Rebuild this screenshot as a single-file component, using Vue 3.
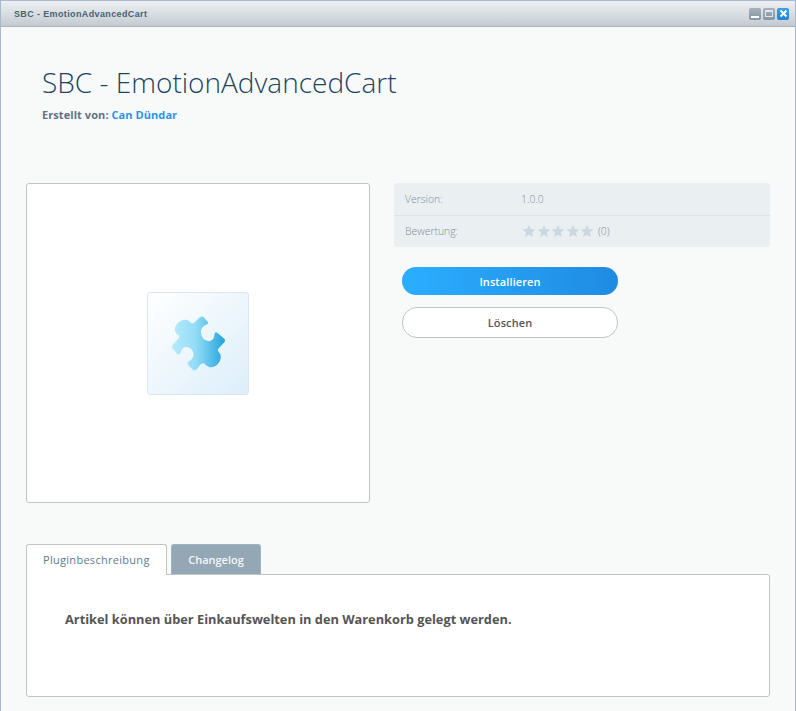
<script setup>
const stars = [1, 2, 3, 4, 5]
</script>

<template>
  <div class="window">
    <div class="titlebar">
      <span class="wintitle">SBC - EmotionAdvancedCart</span>
      <div class="controls">
        <span class="ctl ctl-grey"><i class="min"></i></span>
        <span class="ctl ctl-grey"><i class="max"></i></span>
        <span class="ctl ctl-blue">
          <svg width="9" height="9" viewBox="0 0 9 9"><path d="M1.5 1.5l6 6M7.5 1.5l-6 6" stroke="#fff" stroke-width="2" fill="none" /></svg>
        </span>
      </div>
    </div>
    <div class="content">
      <header class="head">
        <h1>SBC - EmotionAdvancedCart</h1>
        <p class="author">Erstellt von: <a>Can Dündar</a></p>
      </header>
      <section class="main">
        <div class="preview">
          <div class="thumb">
            <svg width="57" height="57" viewBox="120 105 170 170">
              <defs>
                <linearGradient id="pz" x1="0" y1="0" x2="1" y2="0">
                  <stop offset="0" stop-color="#b8eafc" />
                  <stop offset="0.45" stop-color="#93dcf6" />
                  <stop offset="1" stop-color="#22a3dc" />
                </linearGradient>
              </defs>
              <path fill="url(#pz)" d="M209 112 Q215 107 221 112 L233 126 Q236 130 230 133 Q212 140 212 156 Q214 182 236 183 Q252 182 253 160 Q256 154 262 159 L282 176 Q287 181 282 186 L264 206 Q260 212 266 216 Q276 226 268 244 Q256 264 236 260 Q226 256 222 250 Q217 247 212 252 L198 268 Q193 272 188 268 L174 254 Q170 248 175 244 Q192 236 190 220 Q186 202 168 200 Q156 202 152 216 Q150 226 142 222 L127 205 Q123 200 127 195 L146 174 Q150 168 145 165 Q132 160 135 142 Q142 122 165 119 Q178 120 182 128 Q188 132 192 128 Z" />
            </svg>
          </div>
        </div>
        <div class="side">
          <div class="info">
            <div class="row"><span class="label">Version:</span><span>1.0.0</span></div>
            <div class="row">
              <span class="label">Bewertung:</span>
              <span class="stars">
                <svg v-for="s in stars" :key="s" width="14" height="14" viewBox="0 0 24 24"><path fill="#ccd8e1" d="M12 1.5l3.2 7.2 7.8.8-5.9 5.2 1.7 7.7L12 18.4l-6.8 4 1.7-7.7L1 9.5l7.8-.8z" /></svg>
                <span class="count">(0)</span>
              </span>
            </div>
          </div>
          <div class="actions">
            <button class="btn primary">Installieren</button>
            <button class="btn secondary">Löschen</button>
          </div>
        </div>
      </section>
      <section class="tabs">
        <div class="tabbar">
          <div class="tab active">Pluginbeschreibung</div>
          <div class="tab">Changelog</div>
        </div>
        <div class="panel">Artikel können über Einkaufswelten in den Warenkorb gelegt werden.</div>
      </section>
    </div>
  </div>
</template>

<style>
html, body { margin: 0; padding: 0; }
</style>

<style scoped>
.window {
  width: 796px;
  height: 711px;
  box-sizing: border-box;
  border-left: 1px solid #a7b9ce;
  border-right: 1px solid #a7b9ce;
  background: #f8fafa;
  overflow: hidden;
  font-family: "Open Sans", sans-serif;
  position: relative;
}
.titlebar {
  height: 27px;
  box-sizing: border-box;
  border-top: 1px solid #a9bbd0;
  border-bottom: 1px solid #a8b3bd;
  background: linear-gradient(#eef1f3, #c3cbd1);
  display: flex;
  align-items: center;
  justify-content: space-between;
  padding: 0 6px 0 13px;
}
.wintitle {
  font: bold 9px "Liberation Sans", Arial, sans-serif;
  color: #4f5f6d;
  letter-spacing: 0.37px;
}
.controls { display: flex; gap: 2px; }
.ctl {
  width: 12px;
  height: 12px;
  border-radius: 2px;
  display: flex;
  align-items: center;
  justify-content: center;
  position: relative;
}
.ctl-grey { background: linear-gradient(#a5b1bc, #8595a4); }
.ctl-blue { background: linear-gradient(#3aa0ea, #1e84d8); }
.min { position: absolute; left: 2px; right: 2px; bottom: 2px; height: 2px; background: #fff; }
.max { width: 6px; height: 4px; border: 1px solid #dfe5ea; border-top-width: 2px; }
.content { padding: 0 25px; }
.head { padding: 39px 0 0 16px; height: 129px; box-sizing: border-box; }
h1 {
  margin: 0;
  font-size: 28px;
  font-weight: 300;
  line-height: 32px;
  color: #1f4460;
}
.author {
  margin: 9px 0 0;
  font-size: 11px;
  line-height: 16px;
  font-weight: 700;
  color: #5f7285;
  letter-spacing: 0.07px;
}
.author a { color: #2a95e8; }
.main { display: flex; gap: 24px; margin-top: 27px; }
.preview {
  width: 344px;
  height: 320px;
  box-sizing: border-box;
  background: #fff;
  border: 1px solid #bfc4c7;
  border-radius: 3px;
  display: flex;
  align-items: center;
  justify-content: center;
}
.thumb {
  width: 102px;
  height: 103px;
  box-sizing: border-box;
  border: 1px solid #d8e7f2;
  border-radius: 3px;
  background: linear-gradient(135deg, #fff, #dceefa);
  display: flex;
  align-items: center;
  justify-content: center;
}
.side { width: 376px; }
.info {
  background: #eaeff2;
  border-radius: 3px;
  font-size: 10.4px;
  font-weight: 300;
  color: #7f8c94;
}
.row {
  height: 32px;
  display: flex;
  align-items: center;
  padding-left: 11px;
}
.row + .row { border-top: 1px solid #dde3e7; height: 32px; box-sizing: border-box; padding-bottom: 1px; }
.label { width: 116px; }
.stars { display: flex; align-items: center; gap: 0.6px; margin-left: 1px; }
.count { margin-left: 3px; }
.actions {
  margin: 20px 0 0 8px;
  width: 216px;
  display: flex;
  flex-direction: column;
  gap: 12px;
}
.btn {
  display: block;
  width: 100%;
  font-family: inherit;
  font-size: 11px;
  font-weight: 600;
  border-radius: 15px;
  padding: 0;
  letter-spacing: 0.1px;
}
.primary {
  height: 28px;
  border: 0;
  color: #fff;
  background: linear-gradient(90deg, #2baeff, #1f8be3);
}
.secondary {
  height: 31px;
  color: #555;
  background: #fff;
  border: 1px solid #bfc4c7;
}
.tabs { margin-top: 41px; width: 744px; }
.tabbar { display: flex; gap: 4px; height: 30px; position: relative; z-index: 1; }
.tab {
  box-sizing: border-box;
  height: 30px;
  padding: 0 16.5px;
  line-height: 30px;
  font-size: 11px;
  font-weight: 600;
  border-radius: 3px 3px 0 0;
  border: 1px solid #a3b2be;
  border-bottom: 0;
  background: #93a7b5;
  color: #f4f6f7;
}
.tab.active {
  height: 31px;
  padding: 0 16px;
  border-color: #bfc4c7;
  background: #fff;
  color: #5f7a8e;
  font-weight: 400;
  letter-spacing: 0.29px;
}
.panel {
  height: 123px;
  box-sizing: border-box;
  background: #fff;
  border: 1px solid #bfc4c7;
  border-radius: 0 3px 3px 3px;
  padding: 35px 37px 0 38px;
  font-size: 12.8px;
  line-height: 18px;
  font-weight: 700;
  color: #555;
}
</style>
